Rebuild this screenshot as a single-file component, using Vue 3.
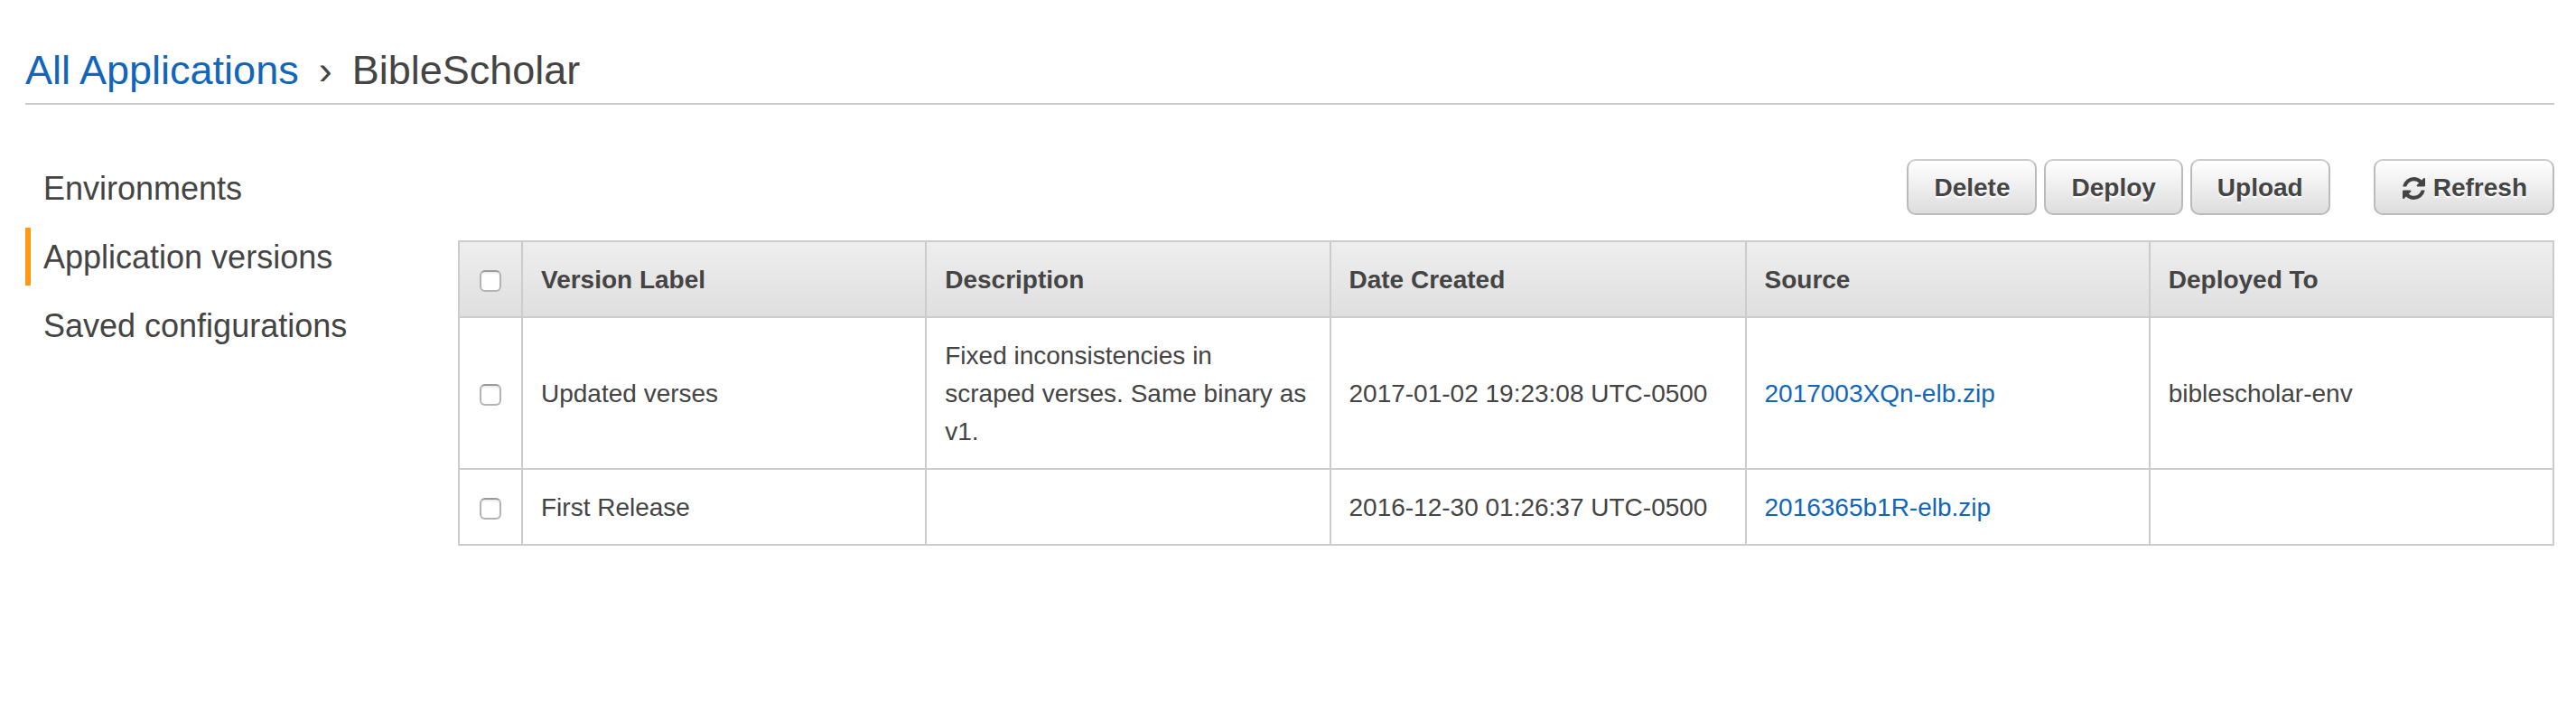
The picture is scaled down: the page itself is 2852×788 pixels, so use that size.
<script setup>
import { ref } from 'vue'

const navItems = [
  { label: 'Environments', active: false },
  { label: 'Application versions', active: true },
  { label: 'Saved configurations', active: false },
]

const actions = ['Delete', 'Deploy', 'Upload']

const versions = ref([
  {
    label: 'Updated verses',
    description: 'Fixed inconsistencies in scraped verses. Same binary as v1.',
    created: '2017-01-02 19:23:08 UTC-0500',
    source: '2017003XQn-elb.zip',
    deployedTo: 'biblescholar-env',
    selected: false,
  },
  {
    label: 'First Release',
    description: '',
    created: '2016-12-30 01:26:37 UTC-0500',
    source: '2016365b1R-elb.zip',
    deployedTo: '',
    selected: false,
  },
])

function toggleAll(event) {
  versions.value.forEach((version) => {
    version.selected = event.target.checked
  })
}
</script>

<template>
  <div class="page">
    <header class="page-header">
      <h1 class="breadcrumb">
        <a href="#">All Applications</a>
        <span class="separator">›</span>
        <span>BibleScholar</span>
      </h1>
    </header>

    <div class="body">
      <nav class="side-nav">
        <a
          v-for="item in navItems"
          :key="item.label"
          href="#"
          class="nav-item"
          :class="{ active: item.active }"
        >{{ item.label }}</a>
      </nav>

      <main class="content">
        <div class="toolbar">
          <button v-for="action in actions" :key="action" type="button" class="button">{{ action }}</button>
          <button type="button" class="button refresh">
            <svg class="icon" viewBox="0 0 1536 1536" aria-hidden="true">
              <path d="M1511 928q0 5-1 7-64 268-268 434.500t-478 166.500q-146 0-282.500-55t-243.500-157l-129 129q-19 19-45 19t-45-19-19-45v-448q0-26 19-45t45-19h448q26 0 45 19t19 45-19 45l-137 137q71 66 161 102t187 36q134 0 250-65t186-179q11-17 53-117 8-23 30-23h192q13 0 22.500 9.500t9.500 22.500zm25-800v448q0 26-19 45t-45 19h-448q-26 0-45-19t-19-45 19-45l138-138q-148-137-349-137-134 0-250 65t-186 179q-11 17-53 117-8 23-30 23h-199q-13 0-22.500-9.500t-9.500-22.500v-7q65-268 270-434.500t480-166.500q146 0 284 55.500t245 156.500l130-129q19-19 45-19t45 19 19 45z" />
            </svg>
            Refresh
          </button>
        </div>

        <table class="versions">
          <colgroup>
            <col class="col-check" />
            <col />
            <col />
            <col class="col-date" />
            <col />
            <col />
          </colgroup>
          <thead>
            <tr>
              <th><input type="checkbox" aria-label="Select all versions" @change="toggleAll" /></th>
              <th scope="col">Version Label</th>
              <th scope="col">Description</th>
              <th scope="col">Date Created</th>
              <th scope="col">Source</th>
              <th scope="col">Deployed To</th>
            </tr>
          </thead>
          <tbody>
            <tr v-for="version in versions" :key="version.label">
              <td><input v-model="version.selected" type="checkbox" :aria-label="'Select ' + version.label" /></td>
              <td>{{ version.label }}</td>
              <td class="description">{{ version.description }}</td>
              <td>{{ version.created }}</td>
              <td><a href="#">{{ version.source }}</a></td>
              <td>{{ version.deployedTo }}</td>
            </tr>
          </tbody>
        </table>
      </main>
    </div>
  </div>
</template>

<style>
body {
  margin: 0;
  background: #fff;
}
</style>

<style scoped>
.page {
  box-sizing: border-box;
  padding: 52px 24px 60px 28px;
  color: #444;
  font-family: "Helvetica Neue", "Liberation Sans", Arial, sans-serif;
  font-size: 28px;
  line-height: 42px;
}

a {
  color: #1166bb;
  text-decoration: none;
}

.page-header {
  padding-bottom: 10px;
  border-bottom: 2px solid #ccc;
}

.breadcrumb {
  display: flex;
  gap: 22px;
  margin: 0;
  font-size: 45px;
  font-weight: 400;
  line-height: 52px;
}

.body {
  display: flex;
  align-items: flex-start;
  padding-top: 60px;
}

.side-nav {
  display: flex;
  flex: 0 0 479px;
  flex-direction: column;
  gap: 12px;
}

.nav-item {
  padding-top: 2px;
  padding-left: 14px;
  border-left: 6px solid transparent;
  color: #444;
  font-size: 36px;
  line-height: 62px;
}

.nav-item.active {
  border-left-color: #ff9914;
}

.content {
  flex: 1;
  min-width: 0;
}

.toolbar {
  display: flex;
  justify-content: flex-end;
  gap: 8px;
  margin-bottom: 28px;
}

.button {
  display: flex;
  align-items: center;
  gap: 9px;
  padding: 9px 28px 7px;
  border: 2px solid #bbb;
  border-top-color: #ccc;
  border-radius: 10px;
  background: linear-gradient(#fff, #ddd);
  color: #444;
  font: inherit;
  font-weight: 700;
  text-shadow: 0 2px 2px #fff;
  cursor: pointer;
}

.refresh {
  margin-left: 40px;
  padding-left: 30px;
}

.icon {
  width: 25px;
  height: 25px;
  fill: #444;
}

.versions {
  width: 100%;
  border-collapse: collapse;
  table-layout: fixed;
}

.col-check {
  width: 70px;
}

.col-date {
  width: 460px;
}

th,
td {
  padding: 21px 20px 19px;
  border: 2px solid #ccc;
  text-align: left;
  vertical-align: middle;
}

th {
  background: linear-gradient(#eee, #dfdfdf);
  font-weight: 700;
}

.description {
  padding-right: 23px;
}

input[type="checkbox"] {
  display: block;
  box-sizing: border-box;
  width: 24px;
  height: 24px;
  margin: 2px auto 0;
  border: 2px solid #b4b4b4;
  border-top-color: #999;
  border-radius: 6px;
  background: #fff;
  box-shadow: inset 0 2px 2px #eee;
  appearance: none;
}

input[type="checkbox"]:checked {
  background: #1166bb;
}
</style>
